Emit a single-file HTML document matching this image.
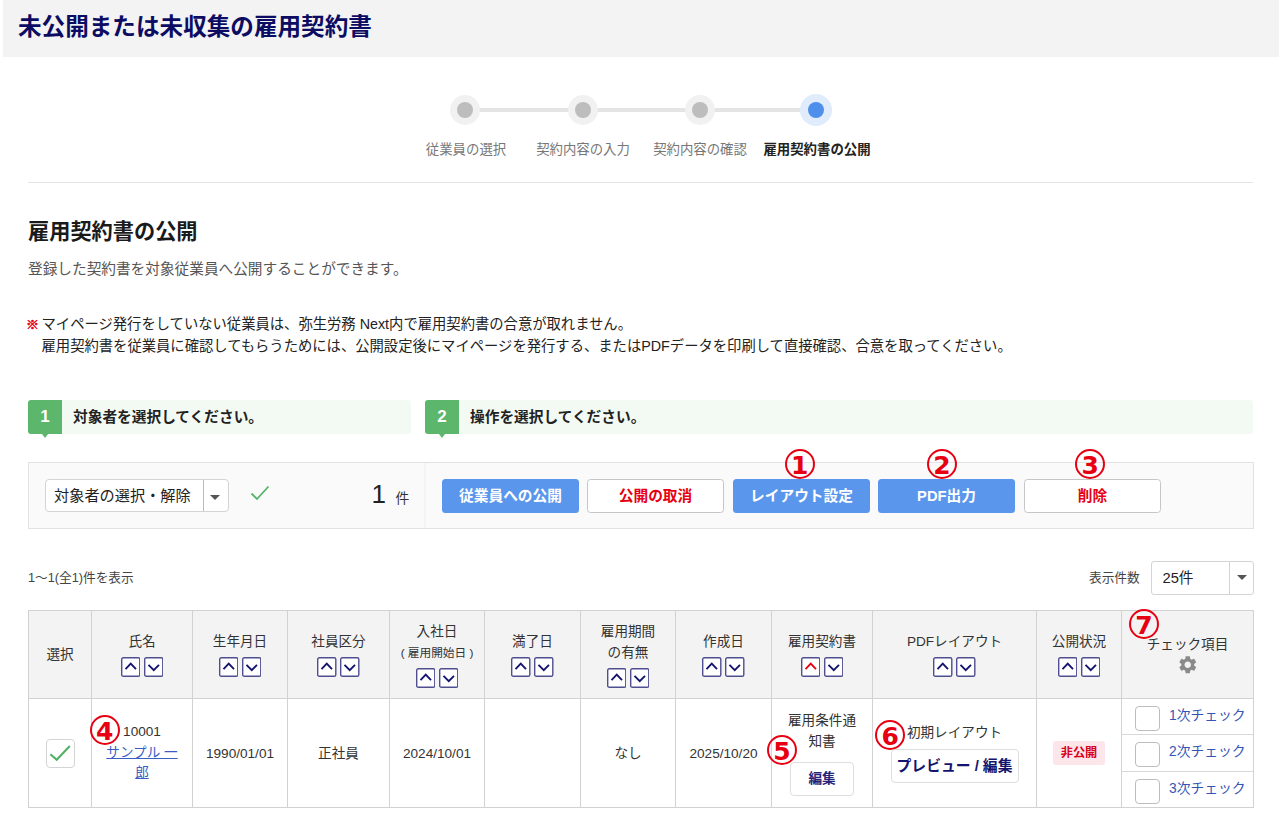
<!DOCTYPE html>
<html lang="ja">
<head>
<meta charset="utf-8">
<title>未公開または未収集の雇用契約書</title>
<style>
*{box-sizing:border-box;margin:0;padding:0}
html,body{width:1280px;height:828px;overflow:hidden;background:#fff}
body{font-family:"Liberation Sans","Noto Sans CJK JP",sans-serif;font-size:13.4px;color:#333;position:relative}
.abs{position:absolute}
/* header */
#hdr{left:3px;top:0;width:1275.5px;height:57px;background:#f3f3f3}
#hdr h1{position:absolute;left:15px;top:0;line-height:54px;font-size:23.6px;font-weight:700;color:#0c0c63;letter-spacing:0;white-space:nowrap}
/* steps */
.sline{height:3.4px;background:#e4e4e4;top:108.3px}
.sdot{width:30px;height:30px;border-radius:50%;background:#f1f1f1;top:95px}
.sdot i{position:absolute;left:7px;top:7px;width:16px;height:16px;border-radius:50%;background:#bdbdbd}
.sdot.on{background:#e0ecfc;width:32px;height:32px;top:94.2px}
.sdot.on i{left:8px;top:8px}
.sdot.on i{background:#4d8fea}
.slbl{top:140px;width:140px;text-align:center;font-size:13.4px;color:#777;line-height:20px;white-space:nowrap}
.slbl.on{color:#222;font-weight:700}
#hr1{left:28px;top:182px;width:1225px;height:1px;background:#e4e4e4}
h2{left:28px;top:217.5px;font-size:21.2px;line-height:28px;font-weight:700;color:#1a1a1a;white-space:nowrap}
#desc{left:28px;top:258.5px;line-height:20px;font-size:14.67px;color:#555;white-space:nowrap}
#note{left:26px;top:314.2px;line-height:21.8px;font-size:14.32px;color:#222;white-space:nowrap}
#note b{color:#e60012;font-weight:700;-webkit-text-stroke:.5px #e60012;font-family:"Liberation Sans","Noto Sans CJK JP",sans-serif;font-size:13px;display:inline-block;width:15.5px;line-height:1}
/* section bars */
.bar{top:400px;height:34px;background:#f3faf3;border-radius:0 3px 3px 0}
.num{top:400px;width:34px;height:34px;background:#5cb66b;color:#fff;font-weight:700;font-size:17px;text-align:center;line-height:33px;border-radius:3px 0 0 3px}
.num:after{content:"";position:absolute;left:13.8px;top:34px;border:3.8px solid transparent;border-top:4px solid #5cb66b;border-bottom:0}
.btxt{top:400px;line-height:34px;font-size:14.7px;font-weight:700;color:#222;white-space:nowrap}
/* toolbar */
#tb{left:28px;top:462px;width:1226px;height:67px;background:#fafafa;border:1px solid #e2e2e2}
#tbl{left:0;top:0;width:397px;height:65px;background:#fafafa;border-right:2px solid #f4f4f4}
#dd{left:45px;top:479px;width:183.5px;height:33px;background:#fff;border:1px solid #d4d4d4;border-radius:4px}
#dd span{position:absolute;left:8px;top:0;line-height:31px;font-size:15.2px;color:#222;white-space:nowrap}
#dd em{position:absolute;left:157px;top:0;width:1px;height:31px;background:#bbb}
#dd u{position:absolute;left:164px;top:14.5px;border:5.5px solid transparent;border-top:5.5px solid #555;border-bottom:0}
.btn{top:479.2px;height:33.5px;width:137px;border-radius:3.5px;text-align:center;line-height:35.5px;font-weight:700;font-size:14.7px;white-space:nowrap}
.btn.b{background:#5a96ec;color:#fff}
.btn.w{background:#fff;border:1px solid #c6c6c6;color:#e60012;line-height:33.5px}
.cn{width:30px;height:30px;border:2px solid #e60012;border-radius:50%;color:#e60012;font-weight:700;font-size:25px;line-height:30.4px;text-align:center;font-family:"DejaVu Sans","Liberation Sans",sans-serif}
/* list head */
#cnt{left:28px;top:567.8px;line-height:20px;font-size:12.7px;color:#444;white-space:nowrap}
#pp{left:1089px;top:567.5px;line-height:20px;font-size:12.7px;color:#444;white-space:nowrap}
#sel{left:1150.5px;top:560.5px;width:103.5px;height:34px;background:#fff;border:1px solid #d4d4d4;border-radius:3px}
#sel span{position:absolute;left:11px;top:0;line-height:32px;font-size:14.7px;color:#222}
#sel em{position:absolute;left:77.5px;top:0;width:1px;height:32px;background:#d4d4d4}
#sel u{position:absolute;left:85.5px;top:13.5px;border:5px solid transparent;border-top:5.5px solid #555;border-bottom:0}
/* table */
#grid{left:28px;top:610px;width:1226px;height:196px;border-collapse:collapse;table-layout:fixed}
#grid th,#grid td{font-size:13.6px;border:1px solid #d2d2d2;text-align:center;vertical-align:middle;font-weight:400;color:#333;padding:0}
#grid th{background:#f3f3f3;height:88px;line-height:19.5px}
#grid th.t2{line-height:21px}
#grid th.t2 .so{margin-top:5.5px}
#grid td{height:108px;background:#fff;line-height:21px}
.so{display:block;height:20px;margin-top:6px;font-size:0;line-height:0}
.so svg{margin:0 1.6px;vertical-align:top}
a{color:#3a5fc4}
small{font-size:11.7px}
.cb{display:inline-block;width:25px;height:25px;background:#fff;border:1px solid #bdbdbd;border-radius:4px;vertical-align:middle}
.cb.big{width:29px;height:29px;position:relative;border-color:#d4d4d4}
.cb.big svg{position:absolute;left:-1px;top:-1px}
#grid td.nm{line-height:20.8px}
#grid td.nm a{text-decoration:underline}
.eb{display:inline-block;width:64px;height:34px;line-height:32px;border:1px solid #dedede;border-radius:4px;background:#fff;color:#23237a;font-weight:700;font-size:13.6px;margin-top:10px}
.pb{display:inline-block;width:128px;height:34px;line-height:32px;border:1px solid #dedede;border-radius:4px;background:#fff;color:#14146e;font-weight:700;font-size:14.8px;margin-top:4px}
.bd{display:inline-block;width:52px;height:24px;line-height:24px;background:#fde6ea;border-radius:3px;color:#d9001b;font-weight:700;font-size:12.2px}
#grid td.ck{padding:0}
#grid td.ck div{height:36px;border-top:1px solid #d9d9d9;text-align:left;padding-left:12.5px;line-height:34px;white-space:nowrap}
#grid td.ck div:first-child{border-top:0;height:35px}
#grid td.ck div:nth-child(2){height:37px}
#grid td.ck .cb{position:relative;top:2px}
#grid td.ck a{margin-left:9.5px;color:#3355b5;font-size:13.8px;text-decoration:none;vertical-align:middle}
.gear{display:block;margin:0.3px auto -1.3px;position:relative;left:0px}

</style>
</head>
<body>
<div id="hdr" class="abs"><h1>未公開または未収集の雇用契約書</h1></div>

<div class="abs sline" style="left:465px;width:352px"></div>
<div class="abs sdot" style="left:450px"><i></i></div>
<div class="abs sdot" style="left:568px"><i></i></div>
<div class="abs sdot" style="left:685px"><i></i></div>
<div class="abs sdot on" style="left:800px"><i></i></div>
<div class="abs slbl" style="left:396px">従業員の選択</div>
<div class="abs slbl" style="left:513px">契約内容の入力</div>
<div class="abs slbl" style="left:630px">契約内容の確認</div>
<div class="abs slbl on" style="left:747px">雇用契約書の公開</div>
<div id="hr1" class="abs"></div>

<h2 class="abs">雇用契約書の公開</h2>
<div id="desc" class="abs">登録した契約書を対象従業員へ公開することができます。</div>
<div id="note" class="abs"><b>※</b>マイページ発行をしていない従業員は、弥生労務 Next内で雇用契約書の合意が取れません。<br><span style="padding-left:15.5px"></span>雇用契約書を従業員に確認してもらうためには、公開設定後にマイページを発行する、またはPDFデータを印刷して直接確認、合意を取ってください。</div>

<div class="abs bar" style="left:62px;width:349px"></div>
<div class="abs num" style="left:28px">1</div>
<div class="abs btxt" style="left:73px">対象者を選択してください。</div>
<div class="abs bar" style="left:459px;width:794px"></div>
<div class="abs num" style="left:425px">2</div>
<div class="abs btxt" style="left:470px">操作を選択してください。</div>

<div id="tb" class="abs"><div id="tbl" class="abs"></div></div>
<div id="dd" class="abs"><span>対象者の選択・解除</span><em></em><u></u></div>
<svg class="abs" style="left:250px;top:485px" width="20" height="16" viewBox="0 0 20 16"><path d="M1.5 8.5 L7 14 L18.5 1.5" fill="none" stroke="#56b36a" stroke-width="1.8"/></svg>
<div class="abs" style="left:371.5px;top:476.7px;font-size:26px;line-height:34px;color:#222">1</div>
<div class="abs" style="left:395.5px;top:487.5px;font-size:13.8px;line-height:22px;color:#333">件</div>

<div class="abs btn b" style="left:442px">従業員への公開</div>
<div class="abs btn w" style="left:587px">公開の取消</div>
<div class="abs btn b" style="left:733px">レイアウト設定</div>
<div class="abs btn b" style="left:878px">PDF出力</div>
<div class="abs btn w" style="left:1024px">削除</div>
<div class="abs cn" style="left:784.8px;top:449.2px">1</div>
<div class="abs cn" style="left:927px;top:449.2px">2</div>
<div class="abs cn" style="left:1075.2px;top:449.2px">3</div>

<div id="cnt" class="abs">1～1(全1)件を表示</div>
<div id="pp" class="abs">表示件数</div>
<div id="sel" class="abs"><span>25件</span><em></em><u></u></div>

<table id="grid" class="abs">
<colgroup><col style="width:63px"><col style="width:101px"><col style="width:95px"><col style="width:102px"><col style="width:95px"><col style="width:96px"><col style="width:95px"><col style="width:96px"><col style="width:101px"><col style="width:164px"><col style="width:85px"><col style="width:132px"></colgroup>
<tr>
<th>選択</th>
<th>氏名<span class="so"><svg width="19.5" height="20" viewBox="0 0 19.5 20"><rect x=".7" y=".7" width="18.1" height="18.6" rx="1.6" fill="#fff" stroke="#4e4e90" stroke-width="1.4"/><path d="M4.5 12.1 L9.75 6.7 L15 12.1" fill="none" stroke="#14146e" stroke-width="1.9"/></svg><svg width="19.5" height="20" viewBox="0 0 19.5 20"><rect x=".7" y=".7" width="18.1" height="18.6" rx="1.6" fill="#fff" stroke="#4e4e90" stroke-width="1.4"/><path d="M4.5 7.8 L9.75 13.2 L15 7.8" fill="none" stroke="#14146e" stroke-width="1.9"/></svg></span></th>
<th>生年月日<span class="so"><svg width="19.5" height="20" viewBox="0 0 19.5 20"><rect x=".7" y=".7" width="18.1" height="18.6" rx="1.6" fill="#fff" stroke="#4e4e90" stroke-width="1.4"/><path d="M4.5 12.1 L9.75 6.7 L15 12.1" fill="none" stroke="#14146e" stroke-width="1.9"/></svg><svg width="19.5" height="20" viewBox="0 0 19.5 20"><rect x=".7" y=".7" width="18.1" height="18.6" rx="1.6" fill="#fff" stroke="#4e4e90" stroke-width="1.4"/><path d="M4.5 7.8 L9.75 13.2 L15 7.8" fill="none" stroke="#14146e" stroke-width="1.9"/></svg></span></th>
<th>社員区分<span class="so"><svg width="19.5" height="20" viewBox="0 0 19.5 20"><rect x=".7" y=".7" width="18.1" height="18.6" rx="1.6" fill="#fff" stroke="#4e4e90" stroke-width="1.4"/><path d="M4.5 12.1 L9.75 6.7 L15 12.1" fill="none" stroke="#14146e" stroke-width="1.9"/></svg><svg width="19.5" height="20" viewBox="0 0 19.5 20"><rect x=".7" y=".7" width="18.1" height="18.6" rx="1.6" fill="#fff" stroke="#4e4e90" stroke-width="1.4"/><path d="M4.5 7.8 L9.75 13.2 L15 7.8" fill="none" stroke="#14146e" stroke-width="1.9"/></svg></span></th>
<th class="t2">入社日<br><small>( 雇用開始日 )</small><span class="so"><svg width="19.5" height="20" viewBox="0 0 19.5 20"><rect x=".7" y=".7" width="18.1" height="18.6" rx="1.6" fill="#fff" stroke="#4e4e90" stroke-width="1.4"/><path d="M4.5 12.1 L9.75 6.7 L15 12.1" fill="none" stroke="#14146e" stroke-width="1.9"/></svg><svg width="19.5" height="20" viewBox="0 0 19.5 20"><rect x=".7" y=".7" width="18.1" height="18.6" rx="1.6" fill="#fff" stroke="#4e4e90" stroke-width="1.4"/><path d="M4.5 7.8 L9.75 13.2 L15 7.8" fill="none" stroke="#14146e" stroke-width="1.9"/></svg></span></th>
<th>満了日<span class="so"><svg width="19.5" height="20" viewBox="0 0 19.5 20"><rect x=".7" y=".7" width="18.1" height="18.6" rx="1.6" fill="#fff" stroke="#4e4e90" stroke-width="1.4"/><path d="M4.5 12.1 L9.75 6.7 L15 12.1" fill="none" stroke="#14146e" stroke-width="1.9"/></svg><svg width="19.5" height="20" viewBox="0 0 19.5 20"><rect x=".7" y=".7" width="18.1" height="18.6" rx="1.6" fill="#fff" stroke="#4e4e90" stroke-width="1.4"/><path d="M4.5 7.8 L9.75 13.2 L15 7.8" fill="none" stroke="#14146e" stroke-width="1.9"/></svg></span></th>
<th class="t2">雇用期間<br>の有無<span class="so"><svg width="19.5" height="20" viewBox="0 0 19.5 20"><rect x=".7" y=".7" width="18.1" height="18.6" rx="1.6" fill="#fff" stroke="#4e4e90" stroke-width="1.4"/><path d="M4.5 12.1 L9.75 6.7 L15 12.1" fill="none" stroke="#14146e" stroke-width="1.9"/></svg><svg width="19.5" height="20" viewBox="0 0 19.5 20"><rect x=".7" y=".7" width="18.1" height="18.6" rx="1.6" fill="#fff" stroke="#4e4e90" stroke-width="1.4"/><path d="M4.5 7.8 L9.75 13.2 L15 7.8" fill="none" stroke="#14146e" stroke-width="1.9"/></svg></span></th>
<th>作成日<span class="so"><svg width="19.5" height="20" viewBox="0 0 19.5 20"><rect x=".7" y=".7" width="18.1" height="18.6" rx="1.6" fill="#fff" stroke="#4e4e90" stroke-width="1.4"/><path d="M4.5 12.1 L9.75 6.7 L15 12.1" fill="none" stroke="#14146e" stroke-width="1.9"/></svg><svg width="19.5" height="20" viewBox="0 0 19.5 20"><rect x=".7" y=".7" width="18.1" height="18.6" rx="1.6" fill="#fff" stroke="#4e4e90" stroke-width="1.4"/><path d="M4.5 7.8 L9.75 13.2 L15 7.8" fill="none" stroke="#14146e" stroke-width="1.9"/></svg></span></th>
<th>雇用契約書<span class="so"><svg width="19.5" height="20" viewBox="0 0 19.5 20"><rect x=".7" y=".7" width="18.1" height="18.6" rx="1.6" fill="#fff" stroke="#4e4e90" stroke-width="1.4"/><path d="M4.5 12.1 L9.75 6.7 L15 12.1" fill="none" stroke="#e60012" stroke-width="1.9"/></svg><svg width="19.5" height="20" viewBox="0 0 19.5 20"><rect x=".7" y=".7" width="18.1" height="18.6" rx="1.6" fill="#fff" stroke="#4e4e90" stroke-width="1.4"/><path d="M4.5 7.8 L9.75 13.2 L15 7.8" fill="none" stroke="#14146e" stroke-width="1.9"/></svg></span></th>
<th>PDFレイアウト<span class="so"><svg width="19.5" height="20" viewBox="0 0 19.5 20"><rect x=".7" y=".7" width="18.1" height="18.6" rx="1.6" fill="#fff" stroke="#4e4e90" stroke-width="1.4"/><path d="M4.5 12.1 L9.75 6.7 L15 12.1" fill="none" stroke="#14146e" stroke-width="1.9"/></svg><svg width="19.5" height="20" viewBox="0 0 19.5 20"><rect x=".7" y=".7" width="18.1" height="18.6" rx="1.6" fill="#fff" stroke="#4e4e90" stroke-width="1.4"/><path d="M4.5 7.8 L9.75 13.2 L15 7.8" fill="none" stroke="#14146e" stroke-width="1.9"/></svg></span></th>
<th>公開状況<span class="so"><svg width="19.5" height="20" viewBox="0 0 19.5 20"><rect x=".7" y=".7" width="18.1" height="18.6" rx="1.6" fill="#fff" stroke="#4e4e90" stroke-width="1.4"/><path d="M4.5 12.1 L9.75 6.7 L15 12.1" fill="none" stroke="#14146e" stroke-width="1.9"/></svg><svg width="19.5" height="20" viewBox="0 0 19.5 20"><rect x=".7" y=".7" width="18.1" height="18.6" rx="1.6" fill="#fff" stroke="#4e4e90" stroke-width="1.4"/><path d="M4.5 7.8 L9.75 13.2 L15 7.8" fill="none" stroke="#14146e" stroke-width="1.9"/></svg></span></th>
<th>チェック項目<svg class="gear" width="21.5" height="21.5" viewBox="0 0 24 24"><path fill="#8a8a8a" d="M19.14 12.94c.04-.3.06-.61.06-.94 0-.32-.02-.64-.07-.94l2.03-1.58a.49.49 0 0 0 .12-.61l-1.92-3.32a.488.488 0 0 0-.59-.22l-2.39.96c-.5-.38-1.03-.7-1.62-.94l-.36-2.54a.484.484 0 0 0-.48-.41h-3.84c-.24 0-.43.17-.47.41l-.36 2.54c-.59.24-1.13.57-1.62.94l-2.39-.96c-.22-.08-.47 0-.59.22L2.74 8.87c-.12.21-.08.47.12.61l2.03 1.58c-.05.3-.09.63-.09.94s.02.64.07.94l-2.03 1.58a.49.49 0 0 0-.12.61l1.92 3.32c.12.22.37.29.59.22l2.39-.96c.5.38 1.03.7 1.62.94l.36 2.54c.05.24.24.41.48.41h3.84c.24 0 .44-.17.47-.41l.36-2.54c.59-.24 1.13-.56 1.62-.94l2.39.96c.22.08.47 0 .59-.22l1.92-3.32c.12-.22.07-.47-.12-.61l-2.01-1.58zM12 15.6c-1.98 0-3.6-1.62-3.6-3.6s1.62-3.6 3.6-3.6 3.6 1.62 3.6 3.6-1.62 3.6-3.6 3.6z"/></svg></th>
</tr>
<tr>
<td><span class="cb big"><svg width="29" height="29" viewBox="0 0 29 29"><path d="M4.4 15.2 L10.7 20.8 L23.8 7" fill="none" stroke="#4fb163" stroke-width="2"/></svg></span></td>
<td class="nm">10001<br><a>サンプル 一<br>郎</a></td>
<td>1990/01/01</td>
<td>正社員</td>
<td>2024/10/01</td>
<td></td>
<td>なし</td>
<td>2025/10/20</td>
<td class="ct">雇用条件通<br>知書<br><span class="eb">編集</span></td>
<td class="pl"><span style="position:relative;top:-1.5px">初期レイアウト</span><br><span class="pb">プレビュー / 編集</span></td>
<td><span class="bd">非公開</span></td>
<td class="ck"><div><span class="cb"></span><a>1次チェック</a></div><div><span class="cb"></span><a>2次チェック</a></div><div><span class="cb"></span><a>3次チェック</a></div></td>
</tr>
</table>
<div class="abs cn" style="left:89.8px;top:715.2px">4</div>
<div class="abs cn" style="left:767px;top:734.6px">5</div>
<div class="abs cn" style="left:875.2px;top:720px">6</div>
<div class="abs cn" style="left:1129px;top:609px">7</div>
</body>
</html>
